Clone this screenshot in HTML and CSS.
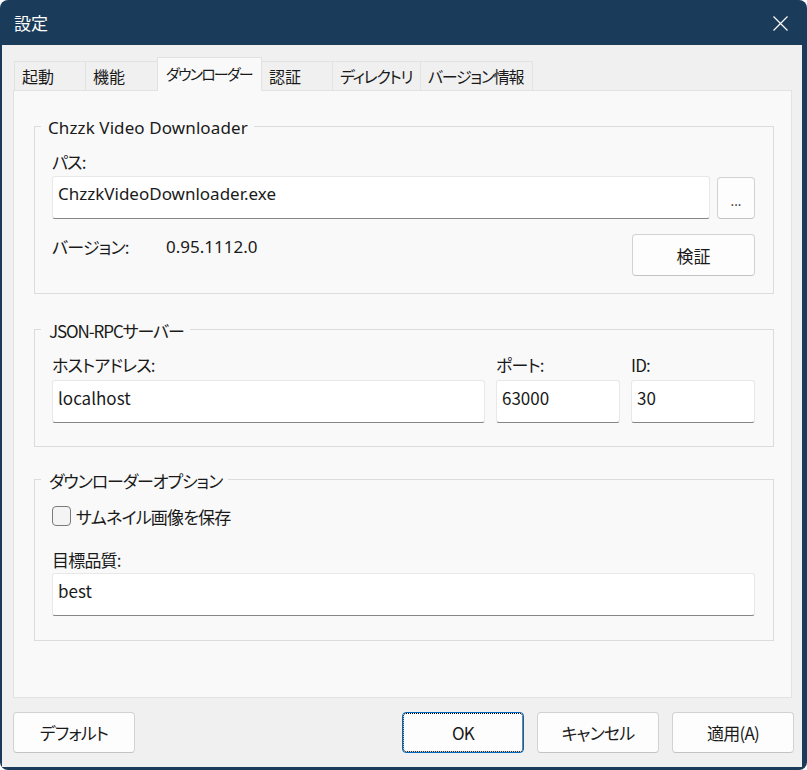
FILE: index.html
```html
<!DOCTYPE html>
<html lang="ja">
<head>
<meta charset="utf-8">
<title>設定</title>
<link rel="stylesheet" href="styles.css">
</head>
<body>
<div class="window">
  <div class="titlebar">
    <span class="title">設定</span>
    <svg class="close" width="15" height="15" viewBox="0 0 15 15"><path d="M0.5 0.5L14.5 14.5M14.5 0.5L0.5 14.5" stroke="#fff" stroke-width="1.2" fill="none"/></svg>
  </div>
  <div class="client">
    <div class="tabs">
      <div class="tab t1">起動</div>
      <div class="tab t2">機能</div>
      <div class="tab t3 active">ダウンローダー</div>
      <div class="tab t4">認証</div>
      <div class="tab t5">ディレクトリ</div>
      <div class="tab t6">バージョン情報</div>
    </div>
    <div class="panel">
      <fieldset class="group g1">
        <legend class="latin">Chzzk Video Downloader</legend>
        <div class="label">パス:</div>
        <div class="row path-row">
          <input class="field latin grow" type="text" value="ChzzkVideoDownloader.exe">
          <button class="btn dots">...</button>
        </div>
        <div class="row ver-row">
          <span class="label ver-label">バージョン:</span>
          <span class="ver latin">0.95.1112.0</span>
          <button class="btn verify">検証</button>
        </div>
      </fieldset>
      <fieldset class="group g2">
        <legend>JSON-RPCサーバー</legend>
        <div class="grid3">
          <div class="col">
            <div class="label">ホストアドレス:</div>
            <input class="field" type="text" value="localhost">
          </div>
          <div class="col">
            <div class="label">ポート:</div>
            <input class="field" type="text" value="63000">
          </div>
          <div class="col">
            <div class="label">ID:</div>
            <input class="field" type="text" value="30">
          </div>
        </div>
      </fieldset>
      <fieldset class="group g3">
        <legend>ダウンローダーオプション</legend>
        <label class="check">
          <input type="checkbox" class="box">
          <span>サムネイル画像を保存</span>
        </label>
        <div class="label quality-label">目標品質:</div>
        <input class="field" type="text" value="best">
      </fieldset>
    </div>
    <div class="footer">
      <button class="btn fbtn">デフォルト</button>
      <div class="right">
        <button class="btn fbtn ok">OK</button>
        <button class="btn fbtn">キャンセル</button>
        <button class="btn fbtn">適用(A)</button>
      </div>
    </div>
  </div>
</div>
</body>
</html>
```

FILE: styles.css
```css
html, body {
  margin: 0;
  padding: 0;
  background: #ffffff;
}
body {
  font-family: "Noto Sans CJK JP", "Noto Sans", sans-serif;
  font-size: 17px;
  color: #1a1a1a;
  font-feature-settings: "palt";
}
.window {
  width: 807px;
  height: 770px;
  box-sizing: border-box;
  background: #1b3b5a;
  border-radius: 8px;
  padding: 0 5px 3px 2px;
  display: flex;
  flex-direction: column;
}
.titlebar {
  height: 45px;
  flex: none;
  display: flex;
  align-items: center;
  justify-content: space-between;
  padding: 0 14px 0 12px;
}
.title {
  color: #ffffff;
  font-size: 17px;
  line-height: 22px;
}
.close {
  display: block;
  margin-top: 1px;
}
.client {
  flex: 1;
  background: #f0f0f0;
  display: flex;
  flex-direction: column;
  padding: 13px 10px 14px 11px;
  min-height: 0;
}
.latin {
  font-family: "Noto Sans", "Noto Sans CJK JP", sans-serif;
}
.tabs {
  display: flex;
  align-items: flex-end;
  height: 32px;
  padding-left: 1px;
  position: relative;
  z-index: 1;
}
.tab {
  height: 29px;
  box-sizing: border-box;
  line-height: 28px;
  padding: 0 7px;
  font-size: 16px;
  background: #f0f0f0;
  border: 1px solid #e2e2e2;
  border-bottom: none;
  margin-right: -1px;
  white-space: nowrap;
  overflow: hidden;
  letter-spacing: -1.3px;
}
.t1 { width: 72px; letter-spacing: 0; }
.t2 { width: 73px; letter-spacing: 0; }
.t3 { width: 105px; font-size: 15px; letter-spacing: -1.8px; padding: 0 2px 0 8px; }
.t4 { width: 72px; letter-spacing: 0; }
.t5 { width: 89px; }
.t6 { width: 113px; }
.tab.active {
  height: 34px;
  margin-bottom: -1px;
  background: #f9f9f9;
  line-height: 32px;
  padding-bottom: 2px;
}
.panel {
  flex: 1;
  background: #f9f9f9;
  border: 1px solid #e2e2e2;
  padding: 22px 17px 0 20px;
}
.group {
  margin: 0;
  border: 1px solid #dcdcdc;
  padding: 12px 18px 17px 17px;
  min-width: 0;
}
.group legend {
  margin-left: -11px;
  padding: 4px 6px 0 7px;
  line-height: 22px;
}
.g1 legend { letter-spacing: 0.1px; }
.g2 { margin-top: 22px; padding-bottom: 23px; }
.g3 { margin-top: 19px; padding-top: 13px; padding-bottom: 24px; }
.g2 legend, .g3 legend {
  font-size: 17px;
  letter-spacing: -1.1px;
  padding-left: 8px;
}
.label {
  line-height: 22px;
  letter-spacing: -0.8px;
}
.row {
  display: flex;
  align-items: flex-start;
}
.path-row {
  margin-top: 3px;
  gap: 7px;
}
.grow {
  flex: 1;
  min-width: 0;
}
.field {
  display: block;
  box-sizing: border-box;
  height: 43px;
  width: 100%;
  margin: 0;
  padding: 0 5px 8px;
  background: #ffffff;
  border: 1px solid #e8e8e8;
  border-bottom: 1px solid #858585;
  border-radius: 3px;
  font-family: "Noto Sans CJK JP", "Noto Sans", sans-serif;
  font-size: 17px;
  color: #1a1a1a;
  outline: none;
}
.field.latin {
  font-family: "Noto Sans", "Noto Sans CJK JP", sans-serif;
}
.btn {
  box-sizing: border-box;
  margin: 0;
  background: #fdfdfd;
  border: 1px solid #d2d2d2;
  border-bottom-color: #c3c3c3;
  border-radius: 4px;
  font-family: "Noto Sans CJK JP", "Noto Sans", sans-serif;
  font-size: 17px;
  color: #1a1a1a;
  padding: 0;
  font-feature-settings: "palt";
}
.dots {
  width: 38px;
  height: 42px;
  margin-top: 1px;
  font-size: 13px;
  line-height: 16px;
  padding-top: 6px;
}
.ver-row {
  margin-top: 15px;
}
.ver-label {
  width: 114px;
  margin-top: 2px;
}
.ver {
  margin-top: 2px;
  line-height: 22px;
  flex: 1;
}
.verify {
  width: 123px;
  height: 42px;
}
.grid3 {
  display: grid;
  grid-template-columns: 1fr 124px 124px;
  column-gap: 11px;
}
.grid3 .label {
  margin-bottom: 4px;
}
.check {
  display: flex;
  align-items: center;
  height: 22px;
  gap: 5px;
  letter-spacing: -0.8px;
}
.box {
  appearance: none;
  -webkit-appearance: none;
  margin: 0;
  width: 19px;
  height: 20px;
  box-sizing: border-box;
  border: 1px solid #7a7a7a;
  border-radius: 4px;
  background: #f4f4f4;
}
.quality-label {
  margin-top: 22px;
  margin-bottom: 2px;
}
.footer {
  display: flex;
  justify-content: space-between;
  padding-top: 14px;
  margin-right: -2px;
}
.right {
  display: flex;
  gap: 13px;
}
.fbtn {
  width: 122px;
  height: 41px;
  letter-spacing: -0.8px;
}
.ok {
  border: 1px solid #0067c0;
  outline: 1px dotted #000000;
  outline-offset: -2px;
}
```
